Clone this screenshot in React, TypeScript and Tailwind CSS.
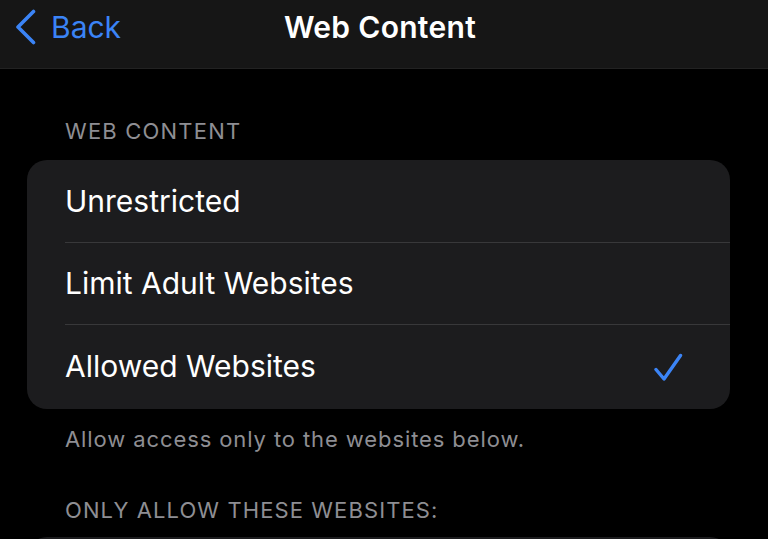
import React from "react";

const Row = ({ label, checked, last }: { label: string; checked?: boolean; last?: boolean }) => (
  <div className="pl-[38px]">
    <div
      className={
        "h-[82px] flex items-center justify-between pr-[47px] " +
        (last ? "" : "border-b border-[#38383a]")
      }
    >
      <span className="text-[30px] text-white">{label}</span>
      {checked && (
        <svg width="29" height="30" viewBox="0 0 29 30" fill="none" className="mt-[4px]">
          <path
            d="M2 16.5 L10 26 L26.5 2.5"
            stroke="#3b84f6"
            strokeWidth="3.4"
            strokeLinecap="round"
            strokeLinejoin="round"
          />
        </svg>
      )}
    </div>
  </div>
);

export default function App() {
  return (
    <div
      className="w-[768px] h-[539px] overflow-hidden bg-black"
      style={{ fontFamily: "Inter, 'Noto Sans', sans-serif" }}
    >
      <div className="h-[69px] bg-[#161616] border-b border-[#222222] relative">
        <div className="flex items-center pl-[14px] gap-[13px] h-[54px]">
          <svg width="24" height="36" viewBox="0 0 24 36" fill="none">
            <path
              d="M19.5 2.5 L4 18 L19.5 33.5"
              stroke="#3b84f6"
              strokeWidth="3.6"
              strokeLinecap="round"
              strokeLinejoin="round"
            />
          </svg>
          <span className="text-[30px] text-[#3b84f6] leading-none">Back</span>
        </div>
        <div className="absolute left-0 right-0 top-0 h-[54px] flex items-center justify-center pointer-events-none">
          <span className="text-[30px] font-semibold text-white leading-none ml-[-8px] tracking-[0.3px]">
            Web Content
          </span>
        </div>
      </div>

      <div className="px-[27px] pr-[38px]">
        <div className="pl-[38px] pt-[50px] pb-[17px] text-[22px] leading-[24px] text-[#8e8e93] tracking-[1.2px]">
          WEB CONTENT
        </div>
        <div className="bg-[#1c1c1e] rounded-[20px] overflow-hidden pt-[1px] pb-[2px]">
          <Row label="Unrestricted" />
          <Row label="Limit Adult Websites" />
          <Row label="Allowed Websites" checked last />
        </div>
        <div className="pl-[38px] pt-[18px] text-[22px] leading-[24px] text-[#8e8e93] tracking-[0.9px]">
          Allow access only to the websites below.
        </div>
        <div className="pl-[38px] pt-[47px] pb-[15px] text-[22px] leading-[24px] text-[#8e8e93] tracking-[1.1px]">
          ONLY ALLOW THESE WEBSITES:
        </div>
        <div className="bg-[#1c1c1e] rounded-[20px] h-[100px]"></div>
      </div>
    </div>
  );
}
